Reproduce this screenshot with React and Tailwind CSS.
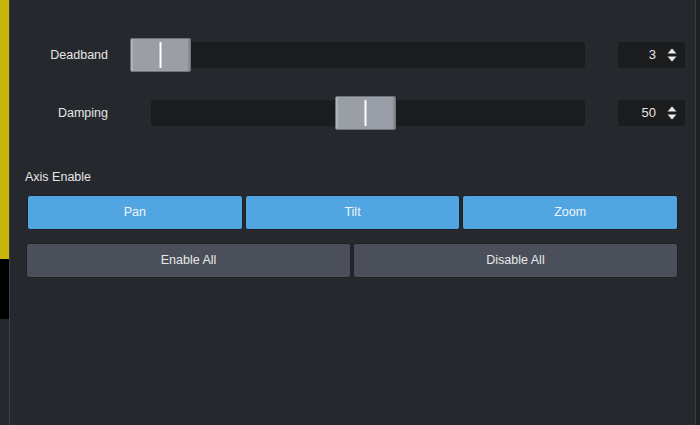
import React from "react";

const Spinner = () => (
  <svg width="10" height="14" viewBox="0 0 10 14" className="block">
    <path d="M5 0.5 L9.5 5.5 L0.5 5.5 Z" fill="#e8e8e8" />
    <path d="M5 13.5 L9.5 8.5 L0.5 8.5 Z" fill="#e8e8e8" />
  </svg>
);

const Thumb = ({ left }) => (
  <div
    className="absolute top-[-4px] h-[34px] w-[61px] rounded-[2px] border border-[#6f737b] bg-[#9a9ea6] shadow-[inset_2px_0_0_#aeb2b9,inset_-2px_0_0_#878b93] flex items-center justify-center"
    style={{ left }}
  >
    <div className="h-[26px] w-[3px] bg-white border-x border-[#c9ccd1]" />
  </div>
);

const SliderRow = ({ label, trackClass, thumbLeft, value }) => (
  <div className="flex items-center h-[34px]">
    <div className="w-[98px] text-right text-[12.5px] text-[#e6e6e6]">{label}</div>
    <div className={`relative h-[26px] rounded-[3px] bg-[#1b1c1e] ${trackClass}`}>
      <Thumb left={thumbLeft} />
    </div>
    <div className="ml-[33px] flex h-[26px] w-[67px] items-center justify-end rounded-[2px] bg-[#1b1c1e] pr-[8px]">
      <span className="mr-[11px] text-[13px] text-[#e6e6e6]">{value}</span>
      <Spinner />
    </div>
  </div>
);

const Btn = ({ children, blue }) => (
  <button
    className={`flex-1 h-[35px] rounded-[3px] border border-[#1e2024] pt-[1px] text-[12.5px] ${
      blue ? "bg-[#51a5e1] text-[#eef5fb]" : "bg-[#4a4f59] text-[#e8e8e8]"
    }`}
  >
    {children}
  </button>
);

export default function App() {
  return (
    <div
      className="flex h-[425px] w-[700px] overflow-hidden bg-[#25282d]"
      style={{ fontFamily: '"Liberation Sans", Arial, sans-serif' }}
    >
      <div className="flex w-[9px] flex-col">
        <div className="h-[259px] bg-[#c9b40a]" />
        <div className="h-[60px] bg-black" />
      </div>
      <div className="w-[1px] bg-[#3b4049]" />
      <div className="flex flex-1 flex-col pt-[38px]">
        <SliderRow label="Deadband" trackClass="ml-[22px] w-[455px]" thumbLeft={0} value="3" />
        <div className="h-[24px]" />
        <SliderRow label="Damping" trackClass="ml-[43px] w-[434px]" thumbLeft={184} value="50" />
        <div className="mt-[38px] pl-[15px] text-[12.5px] text-[#e6e6e6]">Axis Enable</div>
        <div className="mt-[8px] flex gap-[2px] pl-[17px] pr-[17px]">
          <Btn blue>Pan</Btn>
          <Btn blue>Tilt</Btn>
          <Btn blue>Zoom</Btn>
        </div>
        <div className="mt-[13px] flex gap-[2px] pl-[16px] pr-[17px]">
          <Btn>Enable All</Btn>
          <Btn>Disable All</Btn>
        </div>
      </div>
      <div className="w-[1px] bg-[#3a3d42]" />
      <div className="w-[4px] bg-[#1f2125]" />
    </div>
  );
}
